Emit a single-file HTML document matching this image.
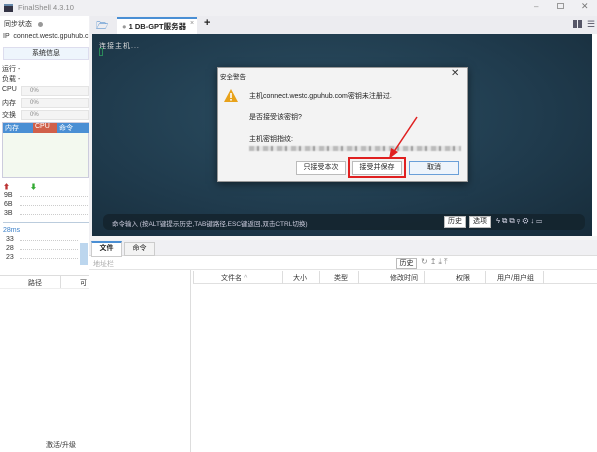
<html><head><style>
*{margin:0;padding:0;box-sizing:border-box}
body{width:597px;height:452px;overflow:hidden;background:#f0f0f3;font-family:"Liberation Sans","Noto Sans CJK SC",sans-serif;font-size:7px;color:#222;position:relative}
.a{position:absolute}
.lb{font-size:7px;color:#333}
.bar{background:#f4f4f4;border:1px solid #e4e4e4;height:10px;font-size:6px;color:#888;padding-left:8px;line-height:8px}
.btn{position:absolute;background:#fff;border:1px solid #bbb;font-size:7px;text-align:center;line-height:12px;height:14px}
.dot{border-top:1px dotted #ccc;position:absolute;height:0}
</style></head><body>
<!-- title -->
<div class="a" style="left:4px;top:4px;width:9px;height:8px;background:#334;border-top:2px solid #68a"></div>
<div class="a" style="left:18px;top:3px;font-size:7.5px;color:#888">FinalShell 4.3.10</div>
<div class="a" style="left:534px;top:2px;color:#888;font-size:8px">–</div>
<div class="a" style="left:557px;top:3px;width:7px;height:6px;border:1px solid #999"></div>
<div class="a" style="left:581px;top:1px;color:#777;font-size:9px">✕</div>
<!-- left panel -->
<div class="a" style="left:0;top:16px;width:89px;height:436px;background:#fff"></div>
<div class="a lb" style="left:4px;top:19px">同步状态</div>
<div class="a" style="left:38px;top:22px;width:5px;height:5px;border-radius:50%;background:#999"></div>
<div class="a lb" style="left:3px;top:33px;white-space:nowrap;width:86px;overflow:hidden">IP &nbsp;connect.westc.gpuhub.c</div>
<div class="a" style="left:3px;top:47px;width:86px;height:13px;background:#eef5fc;border:1px solid #dde;text-align:center;line-height:11px;font-size:7px">系统信息</div>
<div class="a lb" style="left:2px;top:64px">运行 -</div>
<div class="a lb" style="left:2px;top:74px">负载 -</div>
<div class="a lb" style="left:2px;top:86px">CPU</div><div class="a bar" style="left:21px;top:86px;width:68px">0%</div>
<div class="a lb" style="left:2px;top:98px">内存</div><div class="a bar" style="left:21px;top:98px;width:68px">0%</div>
<div class="a lb" style="left:2px;top:110px">交换</div><div class="a bar" style="left:21px;top:110px;width:68px">0%</div>
<div class="a" style="left:2px;top:122px;width:87px;height:56px;background:#f3f9ef;border:1px solid #ccd"></div>
<div class="a" style="left:3px;top:123px;width:30px;height:10px;background:#4a8fd4;color:#fff;font-size:7px;padding-left:2px">内存</div>
<div class="a" style="left:33px;top:123px;width:24px;height:10px;background:#d0604a;color:#fff;font-size:7px;padding-left:2px">CPU</div>
<div class="a" style="left:57px;top:123px;width:32px;height:10px;background:#4a8fd4;color:#fff;font-size:7px;padding-left:2px">命令</div>
<div class="a" style="left:3px;top:182px;color:#b33;font-size:7px">⬆</div>
<div class="a" style="left:30px;top:182px;color:#3a3;font-size:7px">⬇</div>
<div class="a lb" style="left:4px;top:192px">9B</div><div class="dot" style="left:20px;top:196px;width:68px"></div>
<div class="a lb" style="left:4px;top:201px">6B</div><div class="dot" style="left:20px;top:205px;width:68px"></div>
<div class="a lb" style="left:4px;top:210px">3B</div><div class="dot" style="left:20px;top:214px;width:68px"></div>
<div class="a" style="left:3px;top:222px;width:86px;border-top:1px solid #bcd"></div>
<div class="a" style="left:3px;top:227px;color:#3a7fc8;font-size:7px">28ms</div>
<div class="a lb" style="left:6px;top:236px">33</div><div class="dot" style="left:20px;top:240px;width:58px"></div>
<div class="a lb" style="left:6px;top:245px">28</div><div class="dot" style="left:20px;top:249px;width:58px"></div>
<div class="a lb" style="left:6px;top:254px">23</div><div class="dot" style="left:20px;top:258px;width:58px"></div>
<div class="a" style="left:80px;top:243px;width:8px;height:22px;background:#bcd6ee"></div>
<div class="a" style="left:0;top:275px;width:89px;border-top:1px solid #ddd"></div>
<div class="a lb" style="left:28px;top:278px">路径</div>
<div class="a" style="left:60px;top:276px;height:12px;border-left:1px solid #ddd"></div>
<div class="a lb" style="left:80px;top:278px">可</div>
<div class="a" style="left:0;top:288px;width:89px;border-top:1px solid #eee"></div>
<div class="a lb" style="left:46px;top:440px">激活/升级</div>
<!-- tab bar -->
<div class="a" style="left:90px;top:16px;width:507px;height:18px;background:#ececf0"></div>
<div class="a" style="left:96px;top:19px;color:#3a7fc8;font-size:10px">🗁</div>
<div class="a" style="left:117px;top:17px;width:80px;height:17px;background:#fff;border-top:2px solid #4a8fd4"></div>
<div class="a" style="left:122px;top:21px;font-size:7.5px;font-weight:bold;color:#222"><span style="color:#999">●</span> 1 DB-GPT服务器</div>
<div class="a" style="left:190px;top:20px;font-size:7px;color:#888">×</div>
<div class="a" style="left:204px;top:17px;font-size:11px;font-weight:bold">+</div>
<div class="a" style="left:573px;top:20px;width:9px;height:8px;background:linear-gradient(90deg,#556 45%,transparent 45%,transparent 55%,#556 55%)"></div>
<div class="a" style="left:587px;top:19px;font-size:9px;color:#556">☰</div>
<!-- terminal -->
<div class="a" style="left:92px;top:34px;width:500px;height:202px;background:radial-gradient(ellipse at 45% 40%,#2c4f63,#1f3a4c 60%,#172c3a)"></div>
<div class="a" style="left:592px;top:34px;width:5px;height:202px;background:#fff"></div>
<div class="a" style="left:99px;top:41px;color:#ddd;font-size:7px;letter-spacing:1px">连接主机...</div>
<div class="a" style="left:99px;top:48px;width:4px;height:8px;border:1px solid #2a8a5a"></div>
<div class="a" style="left:103px;top:214px;width:482px;height:16px;background:rgba(20,35,45,.85);border-radius:6px"></div>
<div class="a" style="left:112px;top:218px;color:#ccd;font-size:6.5px">命令输入 (按ALT键提示历史,TAB键路径,ESC键返回,双击CTRL切换)</div>
<div class="btn" style="left:444px;top:216px;width:22px;height:12px;line-height:10px">历史</div>
<div class="btn" style="left:469px;top:216px;width:22px;height:12px;line-height:10px">选项</div>
<div class="a" style="left:496px;top:216px;color:#dde;font-size:7.5px;letter-spacing:2px">ϟ⧉⧉⚲⚙↓▭</div>
<!-- dialog -->
<div class="a" style="left:217px;top:67px;width:251px;height:115px;background:#f3f3f3;border:1px solid #999;box-shadow:0 2px 8px rgba(0,0,0,.5)"></div>
<div class="a" style="left:220px;top:71px;font-size:6.5px">安全警告</div>
<div class="a" style="left:451px;top:68px;font-size:10px;color:#333">✕</div>
<svg class="a" style="left:223px;top:88px" width="16" height="15"><path d="M8 1L15 14H1Z" fill="#e8a21a"/><rect x="7.2" y="5" width="1.6" height="5" fill="#fff"/><rect x="7.2" y="11" width="1.6" height="1.6" fill="#fff"/></svg>
<div class="a" style="left:249px;top:91px;font-size:7px">主机connect.westc.gpuhub.com密钥未注册过.</div>
<div class="a" style="left:249px;top:112px;font-size:7px">是否接受该密钥?</div>
<div class="a" style="left:249px;top:134px;font-size:7px">主机密钥指纹:</div>
<div class="a" style="left:249px;top:146px;width:212px;height:5px;background:repeating-linear-gradient(90deg,#bbb 0 5px,#ddd 5px 8px,#999 8px 10px,#e5e5e5 10px 14px);filter:blur(.6px)"></div>
<div class="btn" style="left:296px;top:161px;width:50px">只接受本次</div>
<div class="btn" style="left:352px;top:161px;width:50px">接受并保存</div>
<div class="a" style="left:348px;top:157px;width:58px;height:21px;border:2px solid #e02020"></div>
<div class="btn" style="left:409px;top:161px;width:50px;background:#eef4fb;border-color:#6a9fd8">取消</div>
<svg class="a" style="left:385px;top:115px" width="35" height="45"><path d="M32 2L8 38" stroke="#e02020" stroke-width="1.5"/><path d="M4 44L6 33L13 37Z" fill="#e02020"/></svg>
<!-- splitter -->
<div class="a" style="left:90px;top:236px;width:507px;height:4px;background:#f5f5f5"></div>
<!-- bottom -->
<div class="a" style="left:89px;top:240px;width:508px;height:212px;background:#fff"></div>
<div class="a" style="left:89px;top:240px;width:508px;height:16px;background:#f0f0f3;border-bottom:1px solid #ddd"></div>
<div class="a" style="left:91px;top:241px;width:31px;height:16px;background:#fff;border:1px solid #ccc;border-top:2px solid #4a8fd4;text-align:center;font-size:7px;line-height:12px;font-weight:bold">文件</div>
<div class="a" style="left:124px;top:242px;width:31px;height:14px;background:#f3f3f3;border:1px solid #ccc;text-align:center;font-size:7px;line-height:12px">命令</div>
<div class="a" style="left:89px;top:257px;width:508px;height:13px;border-bottom:1px solid #e4e4e4"></div>
<div class="a" style="left:93px;top:259px;color:#aaa;font-size:7px">地址栏</div>
<div class="btn" style="left:396px;top:258px;width:21px;height:11px;line-height:9px">历史</div>
<div class="a" style="left:421px;top:257px;color:#888;font-size:8px;letter-spacing:2px">↻↥⤓⤒</div>
<div class="a" style="left:190px;top:270px;height:182px;border-left:1px solid #ddd"></div>
<div class="a" style="left:193px;top:271px;width:404px;height:13px;border-bottom:1px solid #e0e0e0;border-left:1px solid #ddd"></div>
<div class="a lb" style="left:221px;top:273px">文件名 <span style="color:#aaa">^</span></div>
<div class="a" style="left:282px;top:271px;height:13px;border-left:1px solid #ddd"></div>
<div class="a lb" style="left:293px;top:273px">大小</div>
<div class="a" style="left:319px;top:271px;height:13px;border-left:1px solid #ddd"></div>
<div class="a lb" style="left:334px;top:273px">类型</div>
<div class="a" style="left:358px;top:271px;height:13px;border-left:1px solid #ddd"></div>
<div class="a lb" style="left:390px;top:273px">修改时间</div>
<div class="a" style="left:424px;top:271px;height:13px;border-left:1px solid #ddd"></div>
<div class="a lb" style="left:456px;top:273px">权限</div>
<div class="a" style="left:485px;top:271px;height:13px;border-left:1px solid #ddd"></div>
<div class="a lb" style="left:497px;top:273px">用户/用户组</div>
<div class="a" style="left:543px;top:271px;height:13px;border-left:1px solid #ddd"></div>
</body></html>
